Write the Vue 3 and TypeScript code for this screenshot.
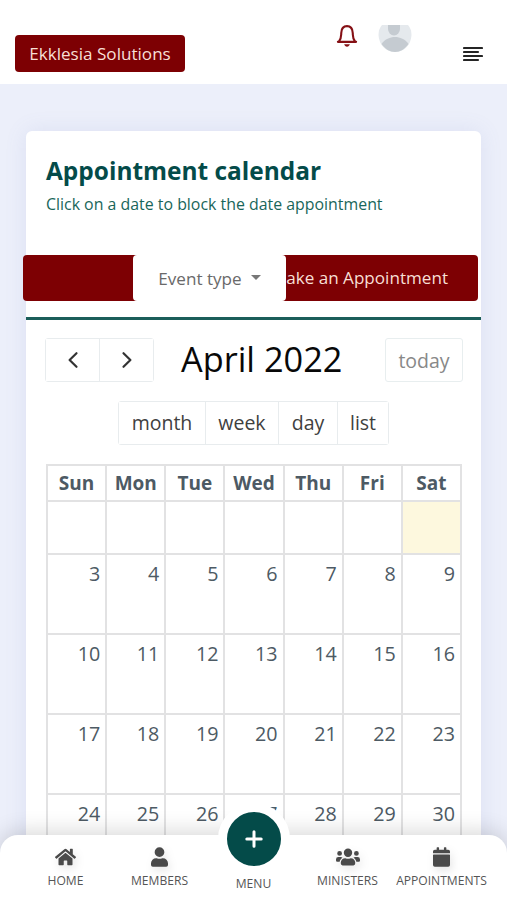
<script setup lang="ts">
interface NavItem {
  label: string
  icon: 'home' | 'user' | 'users' | 'date'
}

const weekdays: string[] = ['Sun', 'Mon', 'Tue', 'Wed', 'Thu', 'Fri', 'Sat']
const views: string[] = ['month', 'week', 'day', 'list']
const weeks: number[][] = [3, 10, 17, 24].map((start) =>
  Array.from({ length: 7 }, (_, i) => start + i),
)
const leftNav: NavItem[] = [
  { label: 'HOME', icon: 'home' },
  { label: 'MEMBERS', icon: 'user' },
]
const rightNav: NavItem[] = [
  { label: 'MINISTERS', icon: 'users' },
  { label: 'APPOINTMENTS', icon: 'date' },
]
const icons: Record<NavItem['icon'], { box: string; path: string }> = {
  home: {
    box: '0 0 576 512',
    path: 'M280.4 148.3 96 300.1V464a16 16 0 0 0 16 16l112.100-.3a16 16 0 0 0 15.900-16V368a16 16 0 0 1 16-16h64a16 16 0 0 1 16 16v95.600a16 16 0 0 0 16 16.100L464 480a16 16 0 0 0 16-16V300L295.700 148.300a12.200 12.200 0 0 0-15.300 0zM571.600 251.500 488 182.600V44.100a12 12 0 0 0-12-12h-56a12 12 0 0 0-12 12v72.600L318.500 43a48 48 0 0 0-61 0L4.300 251.500a12 12 0 0 0-1.600 16.900l25.500 31a12 12 0 0 0 16.900 1.600l235.200-193.700a12.200 12.200 0 0 1 15.300 0L530.900 301a12 12 0 0 0 16.900-1.600l25.500-31a12 12 0 0 0-1.700-16.900z',
  },
  user: {
    box: '0 0 448 512',
    path: 'M224 256a128 128 0 1 0 0-256 128 128 0 0 0 0 256zm89.600 32h-16.700a174 174 0 0 1-145.800 0h-16.700A134.400 134.400 0 0 0 0 422.400V464a48 48 0 0 0 48 48h352a48 48 0 0 0 48-48v-41.600A134.400 134.400 0 0 0 313.600 288z',
  },
  users: {
    box: '0 0 640 512',
    path: 'M96 224a64 64 0 1 0 0-128 64 64 0 0 0 0 128zm448 0a64 64 0 1 0 0-128 64 64 0 0 0 0 128zm32 32h-64c-17.600 0-33.500 7.100-45.100 18.600 40.300 22.100 68.900 62 75.100 109.400h66a32 32 0 0 0 32-32v-32a64 64 0 0 0-64-64zm-256 0a112 112 0 1 0 0-224 112 112 0 0 0 0 224zm76.800 32h-8.300a157 157 0 0 1-137 0h-8.300A115.200 115.200 0 0 0 128 403.200V432a48 48 0 0 0 48 48h288a48 48 0 0 0 48-48v-28.800A115.200 115.200 0 0 0 396.800 288zm-223.700-13.400A64 64 0 0 0 128 256H64a64 64 0 0 0-64 64v32a32 32 0 0 0 32 32h65.900c6.300-47.400 34.900-87.300 75.200-109.400z',
  },
  date: {
    box: '0 0 448 512',
    path: 'M12 192h424a12 12 0 0 1 12 12v260a48 48 0 0 1-48 48H48a48 48 0 0 1-48-48V204a12 12 0 0 1 12-12zm436-44v-36a48 48 0 0 0-48-48h-48V12a12 12 0 0 0-12-12h-40a12 12 0 0 0-12 12v52H160V12a12 12 0 0 0-12-12h-40a12 12 0 0 0-12 12v52H48a48 48 0 0 0-48 48v36a12 12 0 0 0 12 12h424a12 12 0 0 0 12-12z',
  },
}
</script>

<template>
  <div class="page">
    <header class="topbar">
      <button class="brand">Ekklesia Solutions</button>
      <div class="actions">
        <svg class="bell" viewBox="0 0 22 24" fill="none">
          <path d="M1.500 17.600H20.500M2.600 17.200C5.200 14.200 4.800 11.500 5 8.300C5.200 3.500 7.600 1.200 11 1.200S16.800 3.500 17 8.300C17.200 11.500 16.800 14.200 19.400 17.200" stroke="#851015" stroke-width="2.200" stroke-linecap="round" />
          <path d="M8 20.200H14C13.400 22 12.400 22.700 11 22.700S8.600 22 8 20.200Z" fill="#851015" />
        </svg>
        <svg class="avatar" viewBox="0 0 34 27">
          <path d="M4 0H30Q33.500 4 33.500 10C33 20 26 27 17 27S1 20 .5 10Q.5 4 4 0Z" fill="#e5e9ed" />
          <path d="M10 0H22V4A6 6.500 0 0 1 10 4Z" fill="#c5cbd1" />
          <path d="M3.500 19C7 14 12 12 17 12S27 14 30.500 19C27 24 22 27 17 27S7 24 3.500 19Z" fill="#c5cbd1" />
        </svg>
      </div>
      <svg class="burger" viewBox="0 0 20 16">
        <path d="M1 2H19M1 6H15M1 10H19M1 14H15" stroke="#252525" stroke-width="2.200" stroke-linecap="round" />
      </svg>
    </header>

    <main class="card">
      <section class="intro">
        <h1>Appointment calendar</h1>
        <p>Click on a date to block the date appointment</p>
      </section>

      <div class="filters">
        <button class="make">Make an Appointment</button>
        <button class="type">Event type <i class="caret"></i></button>
      </div>

      <section class="calendar">
        <div class="toolbar">
          <div class="group arrows">
            <button><svg viewBox="0 0 12 18"><path d="M9.500 2.200 2.600 9l6.900 6.800" /></svg></button>
            <button><svg viewBox="0 0 12 18"><path d="M2.500 2.200 9.400 9l-6.900 6.800" /></svg></button>
          </div>
          <h2>April 2022</h2>
          <button class="today">today</button>
        </div>
        <div class="group views">
          <button v-for="view in views" :key="view" :class="view">{{ view }}</button>
        </div>
        <table>
          <thead>
            <tr><th v-for="day in weekdays" :key="day">{{ day }}</th></tr>
          </thead>
          <tbody>
            <tr class="first"><td v-for="day in weekdays" :key="day" :class="{ current: day === 'Sat' }"></td></tr>
            <tr v-for="week in weeks" :key="week[0]"><td v-for="date in week" :key="date">{{ date }}</td></tr>
          </tbody>
        </table>
      </section>
    </main>

    <nav class="bottom">
      <a v-for="item in leftNav" :key="item.label">
        <svg :class="item.icon" :viewBox="icons[item.icon].box"><path :d="icons[item.icon].path" /></svg>
        <span>{{ item.label }}</span>
      </a>
      <a class="menu">
        <span class="plus"><svg viewBox="0 0 18 18"><path d="M9 1.800V16.200M1.800 9H16.200" /></svg></span>
        <span>MENU</span>
      </a>
      <a v-for="item in rightNav" :key="item.label">
        <svg :class="item.icon" :viewBox="icons[item.icon].box"><path :d="icons[item.icon].path" /></svg>
        <span>{{ item.label }}</span>
      </a>
    </nav>
  </div>
</template>

<style>
body {
  margin: 0;
  overflow: hidden;
}
</style>

<style scoped>
* {
  box-sizing: border-box;
}
.page {
  position: relative;
  width: 507px;
  height: 900px;
  overflow: hidden;
  background: #eceffa;
  font-family: 'Open Sans', 'Noto Sans', sans-serif;
}
button {
  font: inherit;
  padding: 0;
  border: 0;
  white-space: nowrap;
}
.topbar {
  display: flex;
  align-items: flex-start;
  height: 84px;
  padding: 0 24.500px 0 15px;
  background: #fff;
}
.brand {
  width: 170px;
  height: 37px;
  margin-top: 35px;
  padding-bottom: 1px;
  border-radius: 4px;
  background: #7d0003;
  color: #f7dfd5;
  font-size: 17.100px;
}
.actions {
  display: flex;
  gap: 20px;
  margin: 25px 0 0 151px;
}
.bell {
  width: 22px;
  height: 23px;
}
.avatar {
  width: 34px;
  height: 27px;
}
.burger {
  width: 20px;
  height: 16px;
  margin: 46px 0 0 auto;
}
.card {
  width: 455px;
  height: 780px;
  margin: 47px 0 0 26px;
  border-radius: 6px;
  background: #fff;
  box-shadow: 0 0 22px rgba(105, 120, 190, 0.12);
}
.intro {
  height: 124px;
  padding: 22px 20px 0;
}
h1 {
  margin: 0;
  color: #044b49;
  font-size: 24.450px;
  line-height: 36px;
  font-weight: 700;
  white-space: nowrap;
}
p {
  margin: 3px 0 0;
  color: #19665a;
  font-size: 15.900px;
  line-height: 24px;
  white-space: nowrap;
}
.filters {
  display: grid;
  grid-template-columns: 110px 153px 192px;
  width: 455px;
  height: 46px;
  margin-left: -3px;
}
.make {
  grid-area: 1 / 1 / 2 / 4;
  padding: 0 30px 1px 0;
  border-radius: 4px;
  background: #7d0003;
  color: #f7dfd5;
  font-size: 17.100px;
  text-align: right;
}
.type {
  grid-area: 1 / 2;
  display: flex;
  align-items: center;
  justify-content: center;
  gap: 9px;
  padding-top: 1px;
  border-radius: 4px;
  background: #fff;
  color: #696969;
  font-size: 17.100px;
}
.caret {
  margin-top: -3px;
  border: 5px solid transparent;
  border-top-color: #777;
  border-bottom: 0;
}
.calendar {
  margin-top: 16px;
  padding: 18px 19px 0;
  border-top: 3px solid #1b5e5a;
}
.toolbar {
  display: flex;
  align-items: center;
  height: 44px;
}
.group {
  display: flex;
  height: 44px;
  border: 1.500px solid #e8ecee;
  border-radius: 3px;
}
.group button,
.today {
  background: #fff;
  color: #404040;
  font-size: 19.500px;
}
.group button {
  padding-bottom: 1px;
}
.group button + button {
  border-left: 1.500px solid #e8ecee;
}
.arrows {
  width: 109px;
}
.arrows button {
  display: flex;
  flex: 1;
  align-items: center;
  justify-content: center;
}
.arrows svg {
  width: 12px;
  height: 18px;
  fill: none;
  stroke: #333;
  stroke-width: 2.200;
  stroke-linecap: round;
  stroke-linejoin: round;
}
h2 {
  margin: -3px 0 0 27px;
  color: #080808;
  font-size: 34.300px;
  line-height: 44px;
  font-weight: 400;
  white-space: nowrap;
}
.today {
  width: 78px;
  height: 44px;
  margin-left: auto;
  margin-right: -1px;
  border: 1.500px solid #e8eeef;
  border-radius: 3px;
}
.toolbar .today {
  color: #888;
}
.views {
  width: 271px;
  margin: 19px 0 19px 73px;
}
.month {
  width: 86px;
}
.week {
  width: 73px;
}
.day {
  width: 59px;
}
.list {
  flex: 1;
}
table {
  width: 416px;
  margin-left: 1px;
  table-layout: fixed;
  border-collapse: collapse;
  color: #4d5a64;
}
th,
td {
  padding: 0;
  border: 2px solid #e2e2e3;
}
th {
  height: 36px;
  font-size: 19px;
  line-height: 29px;
  font-weight: 700;
}
td {
  height: 80px;
  padding: 4px 5px 0 0;
  font-size: 19.700px;
  line-height: 30px;
  text-align: right;
  vertical-align: top;
}
.first td {
  height: 53px;
}
.current {
  background: #fdf8de;
}
.bottom {
  position: absolute;
  right: 0;
  bottom: 0;
  left: 0;
  display: grid;
  grid-template-columns: repeat(5, 94px);
  justify-content: center;
  height: 65px;
  border-radius: 18px 18px 0 0;
  background: #fff;
  box-shadow: 0 -3px 22px rgba(0, 0, 0, 0.16);
}
.bottom a {
  display: flex;
  flex-direction: column;
  align-items: center;
  padding-top: 12px;
  color: #555;
  font-size: 12.100px;
  line-height: 18px;
  white-space: nowrap;
}
.bottom a > svg {
  height: 20px;
  margin-bottom: 5px;
  fill: #4a4a4a;
  filter: drop-shadow(2px 4px 4px rgba(0, 0, 0, 0.1));
}
.home {
  width: 21px;
}
.user,
.date {
  width: 17px;
}
.users {
  width: 24px;
}
.bottom .menu {
  padding-top: 0;
}
.plus {
  display: flex;
  align-items: center;
  justify-content: center;
  width: 72px;
  height: 72px;
  margin: -32px 0 0;
  border: 9px solid #fff;
  border-radius: 50%;
  background: #044b49;
}
.plus svg {
  width: 18px;
  height: 18px;
  stroke: #fff;
  stroke-width: 3;
  stroke-linecap: round;
}
</style>
